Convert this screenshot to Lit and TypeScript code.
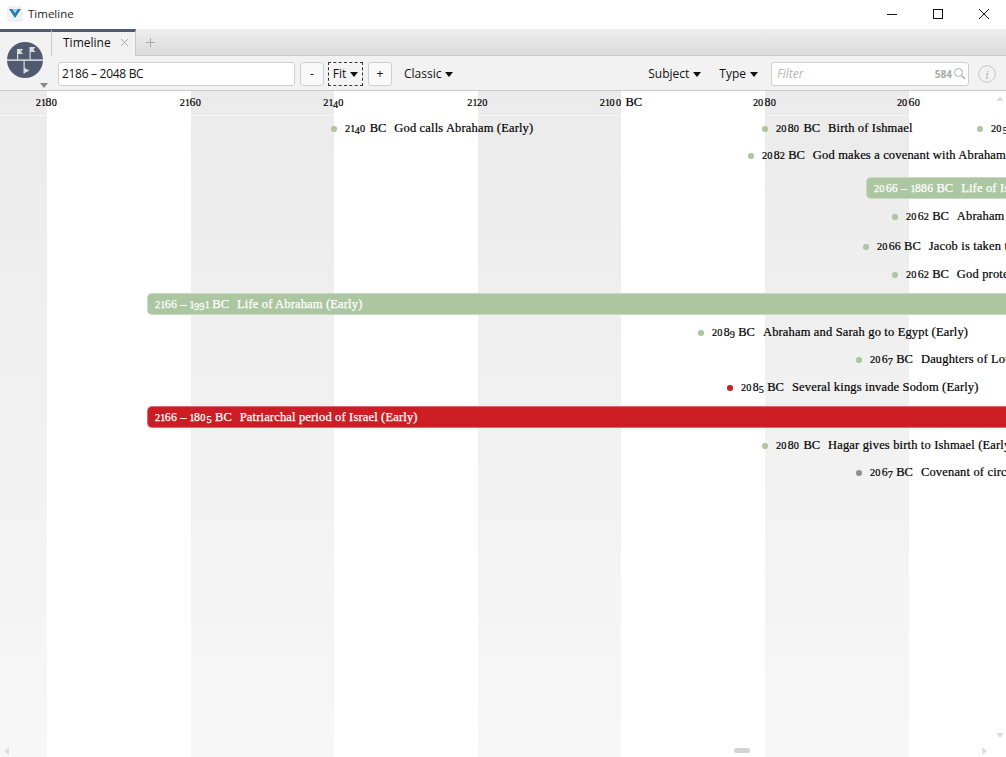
import { LitElement, html, css } from "lit";
import { customElement } from "lit/decorators.js";

const BANDS = [47, 144, 143, 144, 143, 144, 144, 97];
const TICKS = [
  { x: 47, t: "2180" }, { x: 191, t: "2160" }, { x: 334, t: "2140" }, { x: 478, t: "2120" },
  { x: 621, t: "2100 BC" }, { x: 765, t: "2080" }, { x: 909, t: "2060" },
];
const GREEN = "#abc6a1";
const EVENTS = [
  { x: 334, y: 129, c: GREEN, d: "2140 BC", t: "God calls Abraham (Early)" },
  { x: 765, y: 129, c: GREEN, d: "2080 BC", t: "Birth of Ishmael" },
  { x: 980, y: 129, c: GREEN, d: "2059 BC", t: "" },
  { x: 751, y: 156, c: GREEN, d: "2082 BC", t: "God makes a covenant with Abraham (Early)" },
  { x: 895, y: 217, c: GREEN, d: "2062 BC", t: "Abraham offers Isaac" },
  { x: 866, y: 247, c: GREEN, d: "2066 BC", t: "Jacob is taken to Egypt" },
  { x: 895, y: 275, c: GREEN, d: "2062 BC", t: "God protects Isaac" },
  { x: 701, y: 333, c: GREEN, d: "2089 BC", t: "Abraham and Sarah go to Egypt (Early)" },
  { x: 859, y: 360, c: GREEN, d: "2067 BC", t: "Daughters of Lot" },
  { x: 730, y: 388, c: "#cc1d24", d: "2085 BC", t: "Several kings invade Sodom (Early)" },
  { x: 765, y: 446, c: GREEN, d: "2080 BC", t: "Hagar gives birth to Ishmael (Early)" },
  { x: 859, y: 473, c: "#8e9092", d: "2067 BC", t: "Covenant of circumcision" },
];
const BARS = [
  { x: 866, y: 177, c: GREEN, d: "2066 – 1886 BC", t: "Life of Isaac" },
  { x: 147, y: 293, c: GREEN, d: "2166 – 1991 BC", t: "Life of Abraham (Early)" },
  { x: 147, y: 406, c: "#cc1d24", d: "2166 – 1805 BC", t: "Patriarchal period of Israel (Early)" },
];

/* The reference face has old-style numerals; Liberation Serif has none, so each digit gets its own size and drop. */
function oldstyle(s: string) {
  return [...s].map((ch) => {
    if (ch === "1") return html`<span class="n one">${ch}</span>`;
    if (ch === "2") return html`<span class="n two">${ch}</span>`;
    if (ch === "0") return html`<span class="n zero">${ch}</span>`;
    if ("34579".includes(ch)) return html`<span class="n desc">${ch}</span>`;
    if ("68".includes(ch)) return html`<span class="n tall">${ch}</span>`;
    return ch;
  });
}

@customElement("app-root")
export class AppRoot extends LitElement {
  static styles = css`
    :host { display: flex; flex-direction: column; width: 1006px; height: 757px; overflow: hidden; background: #fff;
      font-family: "Open Sans", "Liberation Sans", sans-serif; font-size: 12px; color: #111; }
    .title { height: 29px; flex: none; display: flex; align-items: center; background: #fff; box-sizing: border-box; padding-bottom: 2px; }
    .app-ico { width: 16px; height: 16px; margin-left: 7px; margin-right: 5px; display: block; }
    .title-text { flex: 1; font-size: 11.5px; color: #222; }
    .win { width: 46px; height: 27px; display: flex; align-items: center; justify-content: center; }
    .win svg { margin-left: 2px; }
    .head { flex: none; height: 61px; display: flex; background: #f2f2f2; border-bottom: 1px solid #c9c9c9; }
    .logo-col { width: 51px; flex: none; position: relative; border-top: 3px solid #505b72; box-sizing: border-box; height: 61px; }
    .logo-svg { position: absolute; left: 7px; top: 10px; }
    .logo-caret { position: absolute; left: 40px; top: 51px; width: 0; height: 0; border: 4px solid transparent; border-top: 5px solid #8a8a8a; border-bottom: 0; }
    .main-col { flex: 1; display: flex; flex-direction: column; min-width: 0; }
    .tabs { height: 27px; flex: none; display: flex; background: linear-gradient(#eeeeee, #dadada); border-bottom: 1px solid #c9c9c9; box-sizing: border-box; }
    .tab { width: 85px; box-sizing: border-box; height: 27px; background: #f2f2f2; border-top: 3px solid #505b72; padding-bottom: 3px;
      border-left: 1px solid #c9c9c9; border-right: 1px solid #c9c9c9; display: flex; align-items: center; padding-left: 11px; font-size: 12px; font-weight: 500; color: #111; gap: 9px; }
    .tab svg, .plus svg { display: block; }
    .plus { margin-left: 10px; display: flex; align-items: center; }
    .bar { flex: 1; display: flex; align-items: center; padding: 1px 0 0 7px; box-sizing: border-box; }
    .input { box-sizing: border-box; height: 24px; border: 1px solid #cfcfcf; border-radius: 3px; background: #fff; display: flex; align-items: center; }
    .range { width: 237px; padding-left: 3px; font-size: 12px; letter-spacing: -0.3px; color: #111; }
    .btn { box-sizing: border-box; width: 24px; height: 24px; border: 1px solid #cfcfcf; border-radius: 3px; background: #f9f9f9; display: flex; align-items: center; justify-content: center; font-size: 12px; color: #111; }
    .minus { margin-left: 5px; }
    .fit { margin-left: 4px; width: 35px; border: 1px dashed #333; border-radius: 0; background: #f4f4f4; gap: 4px; }
    .plusbtn { margin-left: 5px; }
    .drop { display: flex; align-items: center; gap: 4px; font-size: 12px; color: #111; }
    .caret { width: 0; height: 0; border-left: 4px solid transparent; border-right: 4px solid transparent; border-top: 5px solid #111; margin-top: 1px; }
    .classic { margin-left: 12px; }
    .spacer { flex: 1; }
    .type { margin-left: 18px; margin-right: 13px; }
    .filter { width: 198px; padding: 0 2px 0 5px; font-style: italic; color: #b5b5b5; font-size: 12px; justify-content: space-between; }
    .count { display: flex; align-items: center; gap: 1px; font-style: normal; font-weight: 700; font-size: 10px; color: #aaa; }
    .info { width: 18px; height: 18px; margin: 0 10px 0 9px; flex: none; display: block; }
    .canvas { flex: 1; position: relative; overflow: hidden; font-family: "Liberation Serif", serif; font-size: 12.5px; color: #000; -webkit-text-stroke: 0.2px currentColor; }
    .bands { position: absolute; inset: 0; display: flex; }
    .band { flex: none; height: 100%; }
    .band.g { background: linear-gradient(#ebebeb, #f7f7f7); }
    .ruler-line { position: absolute; left: 0; right: 0; top: 24px; height: 1px; background: rgba(255,255,255,.55); }
    .tick { position: absolute; top: 4px; transform: translateX(-50%); white-space: nowrap; line-height: 14px; }
    .ev { position: absolute; white-space: pre; line-height: 14px; }
    .dot { position: absolute; width: 5.5px; height: 5.5px; border-radius: 50%; }
    .t { margin-left: 8px; letter-spacing: 0.16px; }
    .span { position: absolute; right: -6px; height: 22px; box-sizing: border-box; border: 1px solid rgba(255,255,255,.35); border-radius: 5px 0 0 5px;
      color: #fff; line-height: 20px; padding-left: 7px; white-space: pre; -webkit-text-stroke: 0.25px #fff; }
    .n { line-height: 0; }
    .one { font-size: 0.8em; letter-spacing: -0.5px; }
    .two { font-size: 0.82em; letter-spacing: 0.1px; }
    .zero { font-size: 0.82em; letter-spacing: 1.3px; }
    .desc { font-size: 0.82em; letter-spacing: 0.2px; vertical-align: -0.16em; }
    .tall { font-size: 0.95em; letter-spacing: 0.2px; }
    .arr { position: absolute; width: 0; height: 0; border: 4px solid transparent; }
    .up { left: 996px; top: 5px; border-bottom: 5px solid #dedede; border-top: 0; }
    .down { left: 996px; top: 642px; border-top: 5px solid #dedede; border-bottom: 0; }
    .left { left: 4px; top: 656px; border-right: 5px solid #dedede; border-left: 0; }
    .right { left: 982px; top: 656px; border-left: 5px solid #dedede; border-right: 0; }
    .thumb { position: absolute; left: 734px; top: 657px; width: 16px; height: 5px; border-radius: 3px; background: #d4d4d4; }
  `;

  render() {
    return html`
      <div class="title">
        <svg class="app-ico" viewBox="0 0 16 16">
          <rect width="16" height="16" rx="3" fill="#f1f1f1"/>
          <path d="M2 3 L8 12 L14 3 L10.5 3 L8 7 L5.5 3 Z" fill="#2a78b4"/>
          <path d="M5.5 3 L8 7 L10.5 3 Z" fill="#9fd3ee"/>
        </svg>
        <div class="title-text">Timeline</div>
        <div class="win"><svg width="12" height="12" viewBox="0 0 12 12"><path d="M1 6.5H11" stroke="#111" fill="none"/></svg></div>
        <div class="win"><svg width="12" height="12" viewBox="0 0 12 12"><rect x="1.5" y="1.5" width="9" height="9" stroke="#111" fill="none"/></svg></div>
        <div class="win"><svg width="12" height="12" viewBox="0 0 12 12"><path d="M1 1L11 11M11 1L1 11" stroke="#111" fill="none"/></svg></div>
      </div>
      <div class="head">
        <div class="logo-col">
          <svg class="logo-svg" width="36" height="36" viewBox="0 0 36 36">
            <circle cx="18" cy="18" r="18" fill="#505b72"/>
            <rect x="0" y="17.4" width="36" height="1.4" fill="#e8e8e8"/>
            <path d="M10 7 H16 L14 9.5 L16 12 H11.2 V17.4 H10 Z" fill="#dcdcdc"/>
            <path d="M22.5 5 H28.5 L26.5 7.5 L28.5 10 H23.7 V17.4 H22.5 Z" fill="#dcdcdc"/>
            <path d="M16.5 18.8 H17.7 V26 L22.5 28.5 L17.7 31 V31.5 H16.5 Z" fill="#dcdcdc"/>
          </svg>
          <div class="logo-caret"></div>
        </div>
        <div class="main-col">
          <div class="tabs">
            <div class="tab">
              <span>Timeline</span>
              <svg width="9" height="9" viewBox="0 0 9 9"><path d="M1 1L8 8M8 1L1 8" stroke="#aaa" fill="none"/></svg>
            </div>
            <div class="plus"><svg width="9" height="9" viewBox="0 0 9 9"><path d="M4.5 0V9M0 4.5H9" stroke="#aaa" fill="none"/></svg></div>
          </div>
          <div class="bar">
            <div class="input range">2186 – 2048 BC</div>
            <div class="btn minus">-</div>
            <div class="btn fit">Fit <span class="caret"></span></div>
            <div class="btn plusbtn">+</div>
            <div class="drop classic">Classic <span class="caret"></span></div>
            <div class="spacer"></div>
            <div class="drop">Subject <span class="caret"></span></div>
            <div class="drop type">Type <span class="caret"></span></div>
            <div class="input filter">Filter
              <span class="count">584
                <svg width="13" height="13" viewBox="0 0 13 13"><circle cx="5.5" cy="5.5" r="4" stroke="#aaa" fill="none"/><path d="M8.5 8.5L12 12" stroke="#aaa" stroke-width="1.4"/></svg>
              </span>
            </div>
            <svg class="info" viewBox="0 0 18 18"><circle cx="9" cy="9" r="8.3" fill="none" stroke="#c4c4c4"/><text x="9" y="13.5" text-anchor="middle" font-family="Liberation Serif" font-style="italic" font-size="13" fill="#b5b5b5">i</text></svg>
          </div>
        </div>
      </div>
      <div class="canvas">
        <div class="bands">
          ${BANDS.map((w, i) => html`<div class="band ${i % 2 === 0 ? "g" : ""}" style="width:${w}px"></div>`)}
        </div>
        <div class="ruler-line"></div>
        ${TICKS.map((k) => html`<div class="tick" style="left:${k.x}px">${oldstyle(k.t)}</div>`)}
        ${EVENTS.map((e) => html`
          <div class="dot" style="left:${e.x - 2.75}px;top:${e.y - 91 - 2.75}px;background:${e.c}"></div>
          <div class="ev" style="left:${e.x + 11}px;top:${e.y - 91 - 8}px">${oldstyle(e.d)}<span class="t">${e.t}</span></div>`)}
        ${BARS.map((b) => html`
          <div class="span" style="left:${b.x}px;top:${b.y - 91}px;background:${b.c}">${oldstyle(b.d)}<span class="t">${b.t}</span></div>`)}
        <div class="arr up"></div>
        <div class="arr down"></div>
        <div class="arr left"></div>
        <div class="arr right"></div>
        <div class="thumb"></div>
      </div>
    `;
  }
}
